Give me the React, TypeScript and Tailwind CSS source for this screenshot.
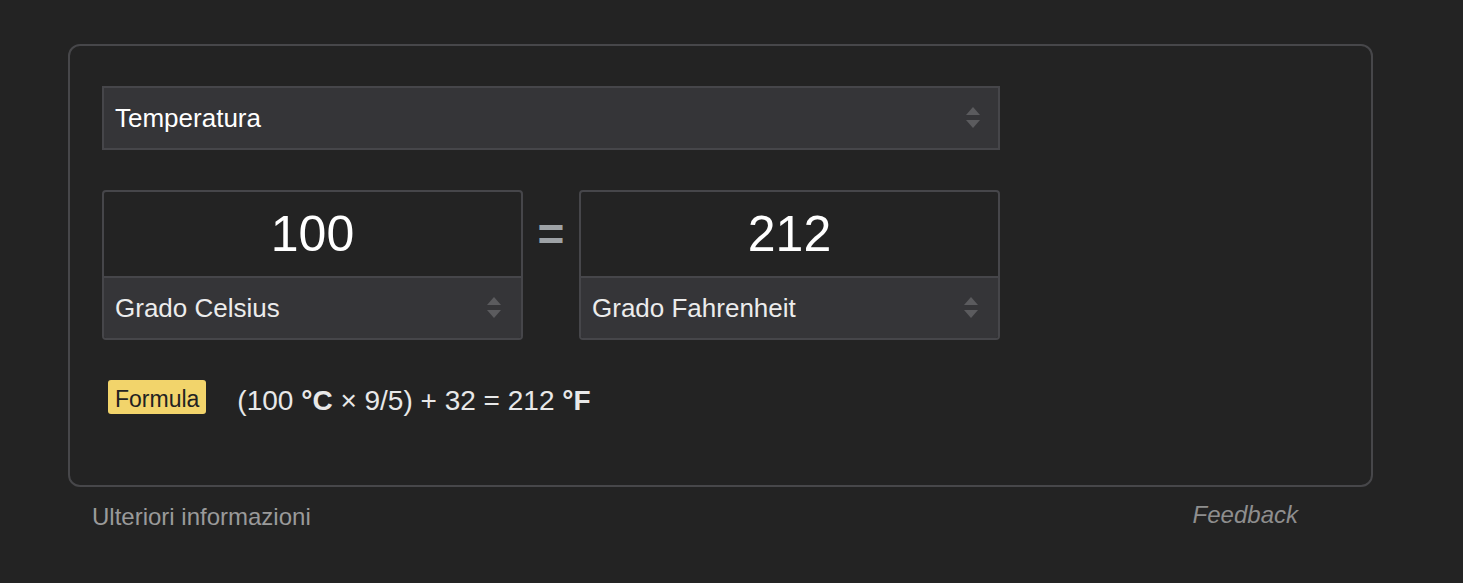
import React from "react";

const font = { fontFamily: '"Liberation Sans", Arial, sans-serif' };

function Arrows() {
  return (
    <svg width="14" height="22" viewBox="0 0 14 22" className="shrink-0">
      <polygon points="0,8 7,0 14,8" fill="#5b5b5e" />
      <polygon points="0,13 14,13 7,21" fill="#5b5b5e" />
    </svg>
  );
}

function UnitBox({ value, unit }: { value: string; unit: string }) {
  return (
    <div className="w-[421px] rounded-[4px] border-2 border-[#46464a] overflow-hidden">
      <div className="h-[84px] flex items-center justify-center text-[50px] text-white">
        {value}
      </div>
      <div className="h-[62px] border-t-2 border-[#46464a] bg-[#353538] flex items-center justify-between pl-[11px] pr-[20px] text-[26px] text-[#ececec]">
        <span>{unit}</span>
        <Arrows />
      </div>
    </div>
  );
}

export default function App() {
  return (
    <div className="min-h-screen bg-[#232323] pt-[44px] pl-[68px]" style={font}>
      <div className="w-[1305px]">
        <div className="rounded-[12px] border-2 border-[#47474a] pt-[40px] pl-[32px] pb-[71px]">
          {/* Category select */}
          <div className="w-[898px] h-[64px] border-2 border-[#46464a] bg-[#353538] flex items-center justify-between pl-[11px] pr-[18px] text-[26px] text-white">
            <span>Temperatura</span>
            <Arrows />
          </div>

          {/* Converter */}
          <div className="mt-[40px] flex w-[898px]">
            <UnitBox value="100" unit="Grado Celsius" />
            <div className="w-[56px] h-[88px] flex items-center justify-center text-[46px] font-bold text-[#9ea2a6] leading-none">
              =
            </div>
            <UnitBox value="212" unit="Grado Fahrenheit" />
          </div>

          {/* Formula */}
          <div className="mt-[40px] h-[34px] flex items-start">
            <span className="ml-[6px] h-[34px] px-[7px] pt-[5px] flex items-center rounded-[3px] bg-[#f2d46b] text-[23px] text-[#222222]">
              Formula
            </span>
            <span className="ml-[31px] mt-[4px] text-[28px] leading-[34px] text-[#e8e8e8]">
              (100 <b>°C</b> × 9/5) + 32 = 212 <b>°F</b>
            </span>
          </div>
        </div>

        {/* Footer */}
        <div className="mt-[12px] flex items-center justify-between pl-[24px] pr-[75px]">
          <span className="text-[24px] text-[#9a9a9a]">Ulteriori informazioni</span>
          <span className="text-[24px] italic text-[#8e8e8e] -mt-[4px]">Feedback</span>
        </div>
      </div>
    </div>
  );
}
